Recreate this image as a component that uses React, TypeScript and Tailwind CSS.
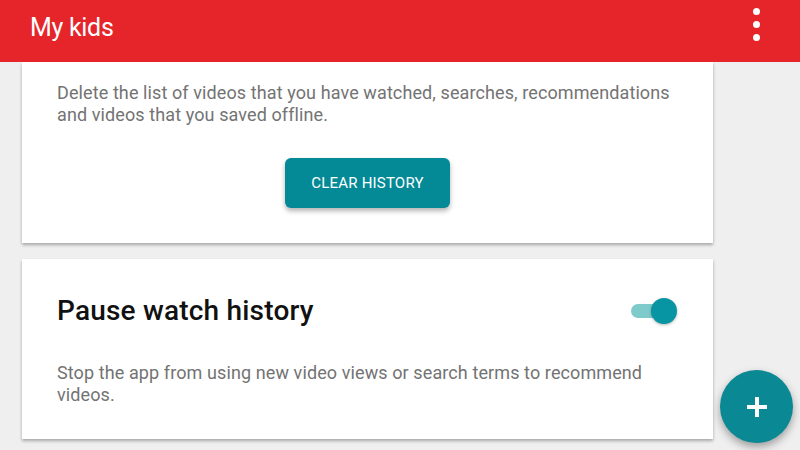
import { useState } from 'react';

const FONT = { fontFamily: 'Roboto, "Noto Sans", Arial, sans-serif' };

export default function App() {
  const [paused, setPaused] = useState(true);

  return (
    <div className="relative w-[800px] h-[450px] overflow-hidden bg-[#efefef]" style={FONT}>
      {/* App bar */}
      <header className="h-[62px] bg-[#e5252a] flex items-center justify-between pl-[30px] pr-[40px]">
        <h1 className="text-white text-[25px] leading-none tracking-[-0.3px] pb-[7px]">My kids</h1>
        <div className="flex flex-col gap-[6px] pb-[13px]">
          <span className="w-[7px] h-[7px] rounded-full bg-white" />
          <span className="w-[7px] h-[7px] rounded-full bg-white" />
          <span className="w-[7px] h-[7px] rounded-full bg-white" />
        </div>
      </header>

      <div className="flex flex-col gap-[16px] pl-[22px] w-[713px]">
        {/* Clear history card (scrolled) */}
        <section className="bg-white h-[181px] shadow-[0_2px_3px_rgba(0,0,0,0.3)] px-[35px] pt-[20px]">
          <p className="text-[#737373] text-[18px] leading-[22px] tracking-[0.1px]">
            Delete the list of videos that you have watched, searches, recommendations and videos that you saved offline.
          </p>
          <div className="flex justify-center mt-[32px]">
            <button className="w-[165px] h-[50px] rounded-[6px] bg-[#038a96] text-white text-[15px] tracking-[0.2px] shadow-[0_3px_5px_rgba(0,0,0,0.3)]">
              CLEAR HISTORY
            </button>
          </div>
        </section>

        {/* Pause watch history card */}
        <section className="bg-white h-[180px] shadow-[0_2px_3px_rgba(0,0,0,0.3)] px-[35px] pt-[35px]">
          <div className="flex items-center justify-between">
            <h2 className="text-[#111] text-[28px] leading-[34px] font-medium tracking-[0.2px]">Pause watch history</h2>
            <button
              onClick={() => setPaused(p => !p)}
              className="relative w-[48px] h-[28px] mr-[1px] flex items-center"
            >
              <span className={`absolute left-[2px] right-[2px] h-[14px] rounded-full ${paused ? 'bg-[#7fcbcb]' : 'bg-[#bdbdbd]'}`} />
              <span className={`absolute top-[1px] w-[26px] h-[26px] rounded-full shadow-[0_1px_3px_rgba(0,0,0,0.3)] ${paused ? 'right-0 bg-[#0795a3]' : 'left-0 bg-[#fafafa]'}`} />
            </button>
          </div>
          <p className="text-[#737373] text-[18px] leading-[22px] tracking-[0.1px] mt-[34px]">
            Stop the app from using new video views or search terms to recommend videos.
          </p>
        </section>
      </div>

      {/* FAB */}
      <button className="absolute left-[720px] top-[370px] w-[73px] h-[73px] rounded-full bg-[#0a8893] shadow-[0_4px_8px_rgba(0,0,0,0.35)] flex items-center justify-center">
        <svg width="24" height="24" viewBox="0 0 24 24">
          <path d="M12 2v20M2 12h20" stroke="white" strokeWidth="4" />
        </svg>
      </button>
    </div>
  );
}
